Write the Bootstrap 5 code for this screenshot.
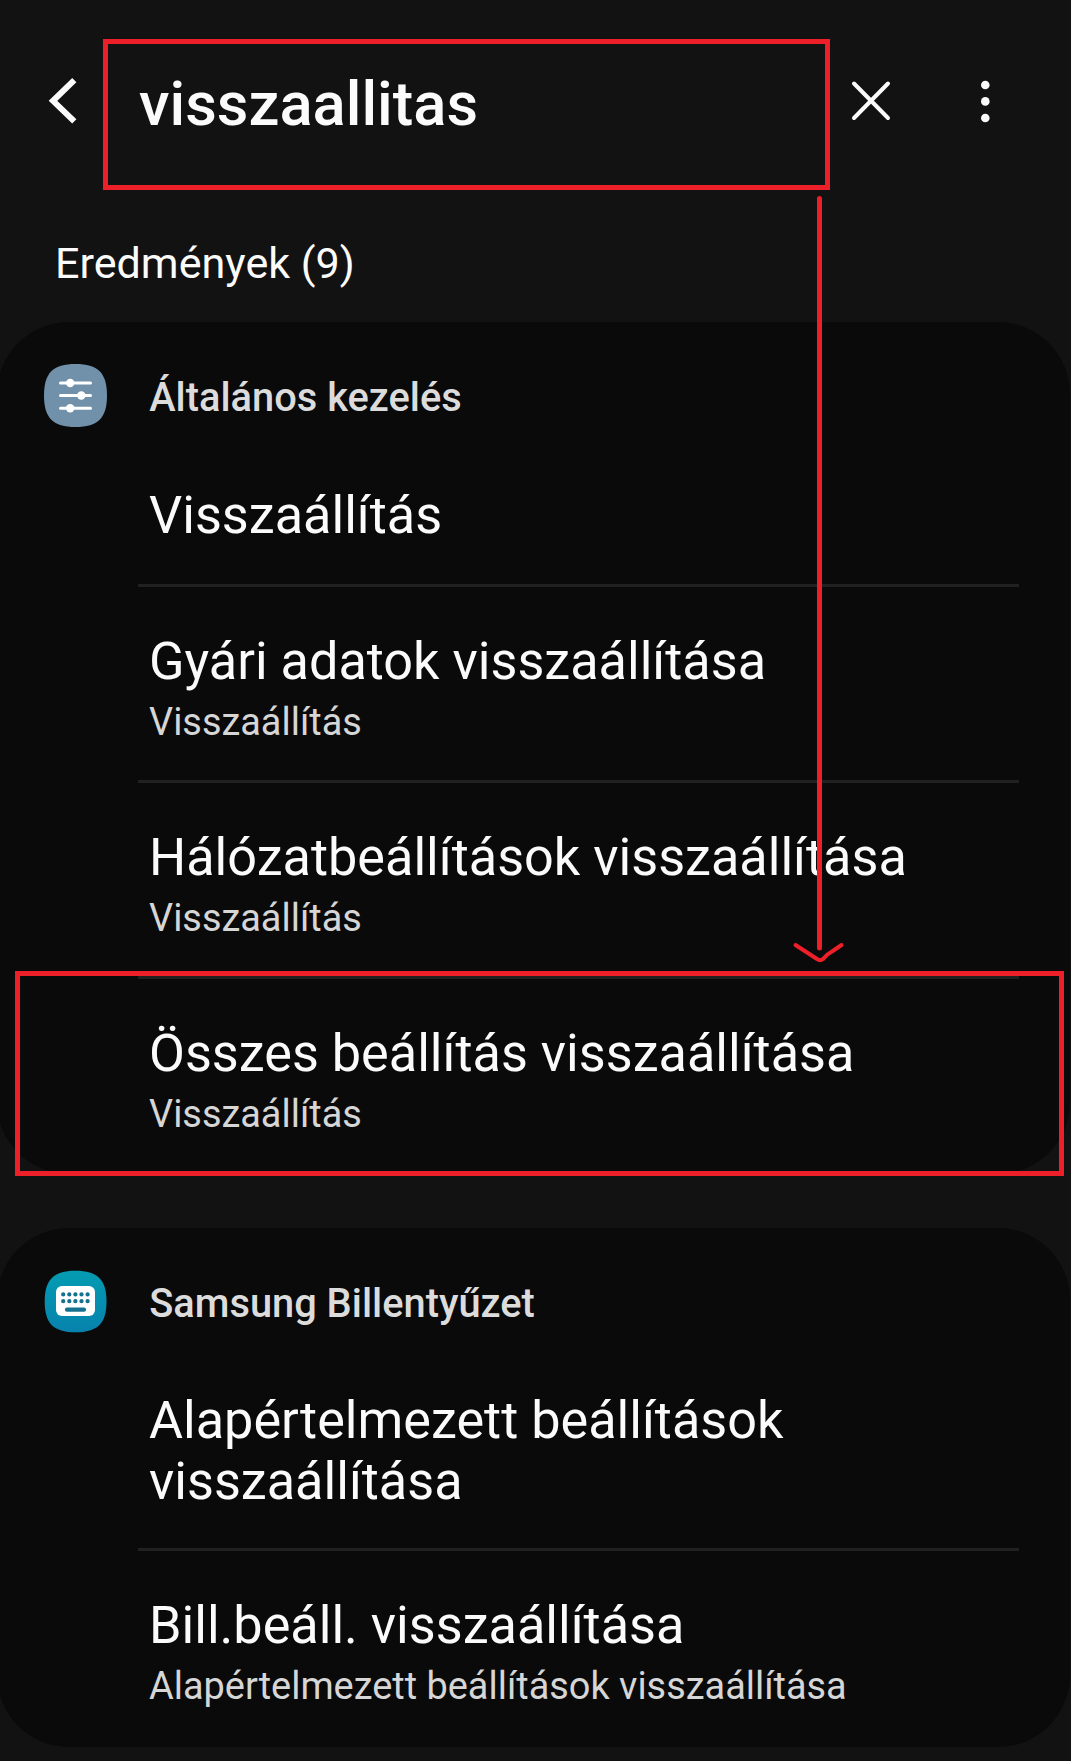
<!DOCTYPE html>
<html lang="hu" data-bs-theme="dark">
<head>
<meta charset="utf-8">
<meta name="viewport" content="width=device-width, initial-scale=1">
<title>Beállítások – keresés</title>
<link href="https://cdn.jsdelivr.net/npm/bootstrap@5.3.0/dist/css/bootstrap.min.css" rel="stylesheet">
<style>
  body { background: #121212; color: #fbfbfb; font-family: Roboto, sans-serif; overflow: hidden; }
  .screen { width: 1071px; height: 1761px; overflow: hidden; }
  .topbar { height: 234px; padding-top: 39px; }
  .back-btn { width: 103px; height: 124px; }
  .search-box { width: 727px; height: 151px; border: 5px solid #ed1f28; padding: 24px 31px 0; font-size: 61.5px; line-height: 72px; font-weight: 540; }
  .clear-btn { width: 82px; height: 124px; }
  .more-btn { width: 146px; height: 124px; }
  .results-label { font-size: 43.1px; line-height: 60px; padding: 0 0 28px 55px; }
  .result-group { background: #0a0a0a; border: 0; border-radius: 72px; margin: 0 1px 0 -3px; padding: 45px 51px 0 47px; --bs-list-group-bg: transparent; }
  .group-one { height: 852px; margin-bottom: 54px; }
  .group-two { height: 519px; }
  .group-title { height: 60px; margin-bottom: 58px; color: #dcdcdc; font-size: 39.8px; line-height: 60px; font-weight: 500; }
  .group-title svg { margin: -3px 42.2px 0 0; flex: none; }
  .group-title span { padding-top: 2px; }
  .group-items { margin-left: 94px; }
  .result-item { background: transparent; border: 0; padding: 0 100px 27px 11px; color: #fbfbfb; font-size: 52.2px; line-height: 61px; }
  .result-item + .result-item { border-top: 3px solid #212121; padding-top: 44px; }
  .result-item.first-one { padding-bottom: 38px; }
  .result-item.first-two { padding-bottom: 36px; }
  .group-two .group-title { margin-bottom: 57px; }
  .item-path { color: #d6d6d6; font-size: 37.9px; line-height: 61px; }
  .annotation { pointer-events: none; }
</style>
<script src="https://cdn.jsdelivr.net/npm/bootstrap@5.3.0/dist/js/bootstrap.bundle.min.js"></script>
</head>
<body>
<main class="screen position-relative">
  <header class="topbar d-flex align-items-start">
    <button class="back-btn btn p-0 border-0" aria-label="Vissza">
      <svg class="d-block" width="103" height="124" viewBox="0 0 103 124" fill="none" stroke="#fbfbfb" stroke-width="6"><path d="M74.3 41.2 53 61.8 74.3 82.4"/></svg>
    </button>
    <div class="search-box">visszaallitas</div>
    <button class="clear-btn btn p-0 border-0" aria-label="Törlés">
      <svg class="d-block" width="82" height="124" viewBox="0 0 82 124" fill="none" stroke="#fbfbfb" stroke-width="4" stroke-linecap="round"><path d="M24 44.500 58 79M58 44.500 24 79"/></svg>
    </button>
    <button class="more-btn btn p-0 border-0" aria-label="Továbbiak">
      <svg class="d-block" width="146" height="124" viewBox="0 0 146 124" fill="#fbfbfb"><circle cx="73.3" cy="46" r="4.3"/><circle cx="73.3" cy="62.4" r="4.3"/><circle cx="73.3" cy="79" r="4.3"/></svg>
    </button>
  </header>

  <div class="results-label">Eredmények (9)</div>

  <section class="result-group group-one card">
    <div class="group-title d-flex align-items-center">
      <svg width="63" height="63" viewBox="0 0 63 63"><path fill="#7191aa" d="M31.5 0C54 0 63 9 63 31.5S54 63 31.5 63 0 54 0 31.5 9 0 31.5 0Z"/><path d="M16.500 19h30M16.500 31.500h30M16.500 44.300h30" stroke="#fff" stroke-width="3" stroke-linecap="round"/><g fill="#fff"><circle cx="26.2" cy="19" r="4.2"/><circle cx="37.3" cy="31.5" r="4.2"/><circle cx="26.2" cy="44.3" r="4.2"/></g></svg>
      <span>Általános kezelés</span>
    </div>
    <div class="group-items list-group list-group-flush">
      <div class="result-item first-one list-group-item">Visszaállítás</div>
      <div class="result-item list-group-item">Gyári adatok visszaállítása<div class="item-path">Visszaállítás</div></div>
      <div class="result-item list-group-item">Hálózatbeállítások visszaállítása<div class="item-path">Visszaállítás</div></div>
      <div class="result-item list-group-item">Összes beállítás visszaállítása<div class="item-path">Visszaállítás</div></div>
    </div>
  </section>

  <section class="result-group group-two card">
    <div class="group-title d-flex align-items-center">
      <svg width="63" height="63" viewBox="0 0 63 63"><defs><linearGradient id="teal" x2="0" y2="1"><stop stop-color="#049cb2"/><stop offset="1" stop-color="#0782ad"/></linearGradient></defs><path fill="url(#teal)" d="M31.5.7C53.500.7 62.500 9.500 62.500 31.500S53.500 62.300 31.500 62.300.7 53.500.7 31.500 9.500.7 31.500.7Z"/><rect x="12" y="16" width="39" height="30" rx="6" fill="#fff"/><g stroke="#14718f" stroke-linecap="round"><path d="M19.200 24.400h25M19.200 31.200h25" stroke-width="4.300" stroke-dasharray="0 6.100"/><path d="M23 39.700h17" stroke-width="4.200"/></g></svg>
      <span>Samsung Billentyűzet</span>
    </div>
    <div class="group-items list-group list-group-flush">
      <div class="result-item first-two list-group-item">Alapértelmezett beállítások visszaállítása</div>
      <div class="result-item list-group-item pe-0">Bill.beáll. visszaállítása<div class="item-path">Alapértelmezett beállítások visszaállítása</div></div>
    </div>
  </section>

  <svg class="annotation position-absolute top-0 start-0" width="1071" height="1761" viewBox="0 0 1071 1761" fill="none" stroke="#ed1f28">
    <path d="M819.500 198.500V948" stroke-width="5" stroke-linecap="round"/>
    <path d="M795.500 945 817 959q3 2.500 6 0 4-5 9-7.500L841.500 945" stroke-width="4" stroke-linecap="round" stroke-linejoin="round"/>
    <rect x="17.500" y="973.500" width="1044" height="200" stroke-width="5"/>
  </svg>
</main>
</body>
</html>
